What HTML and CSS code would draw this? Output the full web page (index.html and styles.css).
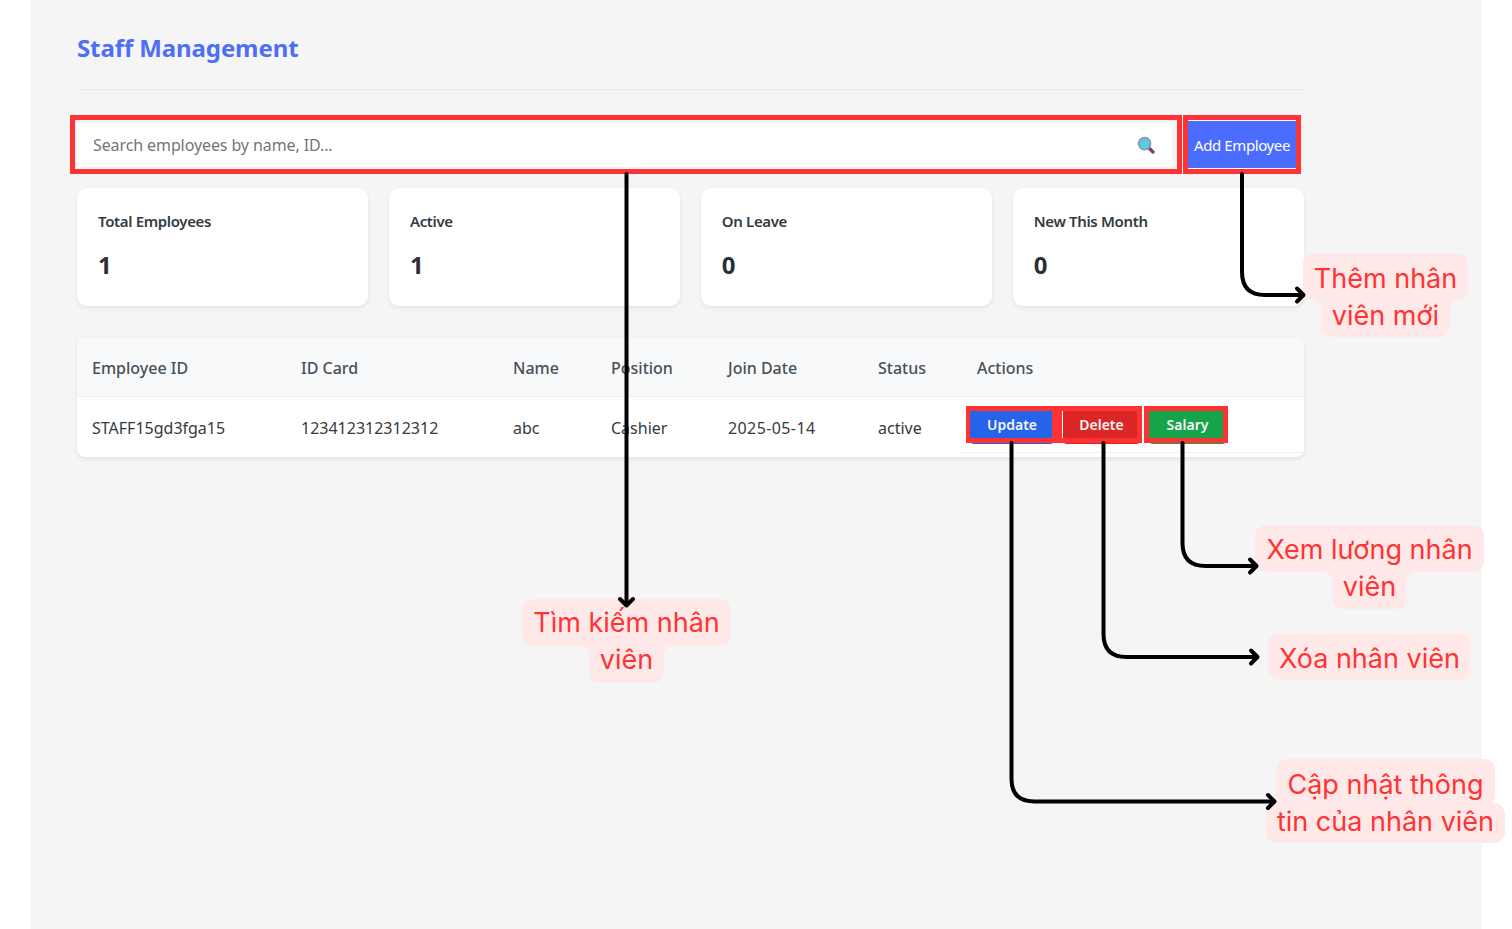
FILE: index.html
```html
<!DOCTYPE html>
<html lang="vi">
<head>
<meta charset="utf-8">
<title>Staff Management</title>
<link rel="stylesheet" href="styles.css">
</head>
<body>
<main class="panel">
  <header class="page-head"><h1>Staff Management</h1></header>
  <section class="toolbar">
    <div class="search">
      <span class="placeholder">Search employees by name, ID...</span>
      <svg class="lens" width="18" height="18" viewBox="0 0 18 18" aria-hidden="true">
        <path d="M11 11l5 5" stroke="#7c3f7e" stroke-width="3.4" stroke-linecap="round"/>
        <circle cx="7.600" cy="7.600" r="6" fill="#5cc8ea" stroke="#8a9aa8" stroke-width="1.600"/>
      </svg>
    </div>
    <button class="add-btn">Add Employee</button>
  </section>
  <section class="stats">
    <div class="card"><h3>Total Employees</h3><p>1</p></div>
    <div class="card"><h3>Active</h3><p>1</p></div>
    <div class="card"><h3>On Leave</h3><p>0</p></div>
    <div class="card"><h3>New This Month</h3><p>0</p></div>
  </section>
  <section class="table-wrap">
    <div class="row head">
      <span>Employee ID</span><span>ID Card</span><span>Name</span><span>Position</span><span>Join Date</span><span>Status</span><span>Actions</span>
    </div>
    <div class="row body">
      <span>STAFF15gd3fga15</span><span>123412312312312</span><span>abc</span><span>Cashier</span><span class="date">2025-05-14</span><span>active</span>
      <div class="actions">
        <button class="act update">Update</button>
        <button class="act delete">Delete</button>
        <button class="act salary">Salary</button>
      </div>
    </div>
  </section>
</main>

<div class="mark m-search"></div>
<div class="mark m-add"></div>
<div class="mark m-update"></div>
<div class="mark m-delete"></div>
<div class="mark m-salary"></div>

<div class="note n-add"><span>Thêm nhân</span><span>viên mới</span></div>
<div class="note n-search"><span>Tìm kiếm nhân</span><span>viên</span></div>
<div class="note n-salary"><span>Xem lương nhân</span><span>viên</span></div>
<div class="note n-delete"><span>Xóa nhân viên</span></div>
<div class="note n-update"><span>Cập nhật thông</span><span>tin của nhân viên</span></div>

<svg class="arrows" width="1512" height="929" viewBox="0 0 1512 929" aria-hidden="true">
  <g fill="none" stroke="#000" stroke-width="4" stroke-linecap="round" stroke-linejoin="round">
    <path d="M626.500 174V605"/><path d="M620 599l6.500 6.500 6.500-6.500"/>
    <path d="M1242 174V272Q1242 295 1265 295H1303"/><path d="M1297 288.500l6.500 6.500-6.500 6.500"/>
    <path d="M1182.500 443V543Q1182.500 566 1205.500 566H1256"/><path d="M1250 559.500l6.500 6.500-6.500 6.500"/>
    <path d="M1103.500 443V634Q1103.500 657 1126.500 657H1257"/><path d="M1251 650.500l6.500 6.500-6.500 6.500"/>
    <path d="M1011.500 443V779Q1011.500 801.500 1034.500 801.500H1274"/><path d="M1268 795l6.500 6.500-6.500 6.500"/>
  </g>
</svg>
</body>
</html>
```
FILE: styles.css
```css
* { box-sizing: border-box; }
html, body { margin: 0; padding: 0; background: #fff; }
body { position: relative; width: 1512px; height: 929px; overflow: hidden; font-family: "Noto Sans", "Open Sans", sans-serif; color: #343a40; }

.panel { width: 1452px; height: 929px; margin-left: 30px; padding: 29px 178px 0 47px; background: #f5f5f5; }

.page-head { height: 61px; border-bottom: 1px solid #e9ecef; margin-bottom: 30px; }
h1 { margin: 0; font-size: 24px; line-height: 37px; font-weight: 700; color: #4f6ef7; letter-spacing: -0.1px; }

.toolbar { display: flex; gap: 16px; height: 49px; margin-bottom: 19px; padding-right: 8px; }
.search { flex: 1; display: flex; align-items: center; justify-content: space-between; margin: 3px 0 2px; padding: 0 17px 0 16px; background: #fff; border-radius: 4px; }
.placeholder { font-size: 16px; color: #757575; letter-spacing: -0.1px; }
.lens { display: block; }
.add-btn { width: 108px; border: 0; border-top: 1px solid #fff; border-bottom: 1px solid #fff; background: #4a6cff; color: #fff; font: 15px "Noto Sans", sans-serif; letter-spacing: -0.4px; padding: 0; }

.stats { display: grid; grid-template-columns: repeat(4, 1fr); gap: 20.67px; margin-bottom: 32px; }
.card { height: 118px; padding: 23px 21px; background: #fff; border-radius: 10px; box-shadow: 0 2px 4px rgba(0,0,0,.08); }
.card h3 { margin: 0 0 17px; font-size: 15px; line-height: 20px; font-weight: 600; color: #343a40; letter-spacing: -0.35px; }
.card p { margin: 0; font-size: 24px; line-height: 33px; font-weight: 700; color: #2c3034; }

.table-wrap { background: #fff; border-radius: 8px; box-shadow: 0 2px 4px rgba(0,0,0,.08); overflow: hidden; }
.row { display: grid; grid-template-columns: 209px 212px 98px 117px 150px 99px 342px; align-items: center; font-size: 16px; }
.row > span { padding-left: 15px; }
.head { height: 59px; padding-top: 1px; background: #f8f9fa; font-weight: 500; color: #495057; border-bottom: 1px solid #eef0f2; }
.body { height: 60px; padding-top: 1px; color: #343a40; }
.date { letter-spacing: .4px; }
.actions { display: flex; align-self: start; height: 55px; padding: 10px 0 0 9px; border-bottom: 1px solid #eef0f2; margin-left: -1px; }
.act { height: 36px; border: 0; border-radius: 4px; padding: 0 0 3px; color: #f4f4f4; font: 600 14px "Noto Sans", sans-serif; }
.update { width: 84px; margin-right: 9px; background: #2563eb; }
.delete { width: 77px; margin-right: 9px; background: #dc2626; }
.salary { width: 77px; background: #16a34a; }

.mark { position: absolute; border: 5px solid #ff3333; }
.m-search { left: 70px; top: 115px; width: 1112px; height: 59px; }
.m-add { left: 1183px; top: 115px; width: 118px; height: 59px; }
.m-update { left: 966px; top: 406px; width: 91px; height: 37px; border-left-width: 4px; }
.m-delete { left: 1057px; top: 406px; width: 85px; height: 37px; }
.m-salary { left: 1144px; top: 406px; width: 84px; height: 37px; }

.arrows { position: absolute; left: 0; top: 0; pointer-events: none; }

.note { position: absolute; display: flex; flex-direction: column; align-items: center; font-family: Inter, "Liberation Sans", sans-serif; font-size: 27px; line-height: 37px; color: #ff3333; text-align: center; white-space: nowrap; }
.note span { position: relative; padding: 5px 11px; background: #ffe9e8; border-radius: 11px; }
.note span + span { margin-top: -5px; padding-top: 0; border-top-left-radius: 0; border-top-right-radius: 0; }
.note span + span::before, .note span + span::after { content: ""; position: absolute; top: 5px; width: 8px; height: 8px; }
.note span + span::before { left: -8px; background: radial-gradient(circle at 0 100%, transparent 7.5px, #ffe9e8 8px); }
.note span + span::after { right: -8px; background: radial-gradient(circle at 100% 100%, transparent 7.5px, #ffe9e8 8px); }
.n-add { left: 1304px; top: 253px; width: 163px; }
.n-add span:first-child, .n-delete span, .n-update span:first-child { padding-top: 7px; padding-bottom: 3px; }
.n-add span + span { margin-top: -3px; padding-bottom: 3px; }
.n-add span + span::before, .n-add span + span::after { top: 3px; }
.n-search { left: 523px; top: 599px; width: 207px; }
.n-salary { left: 1255px; top: 525px; width: 229px; }
.n-salary span:first-child { padding-top: 6px; padding-bottom: 4px; }
.n-salary span + span { margin-top: -4px; padding-bottom: 4px; }
.n-salary span + span::before, .n-salary span + span::after { top: 4px; }
.n-delete { left: 1269px; top: 633px; width: 201px; }
.n-update { left: 1265px; top: 759px; width: 241px; }
.n-update span + span { margin-top: -3px; padding-bottom: 3px; border-radius: 11px; }
.n-update span + span::before, .n-update span + span::after { display: none; }
```
